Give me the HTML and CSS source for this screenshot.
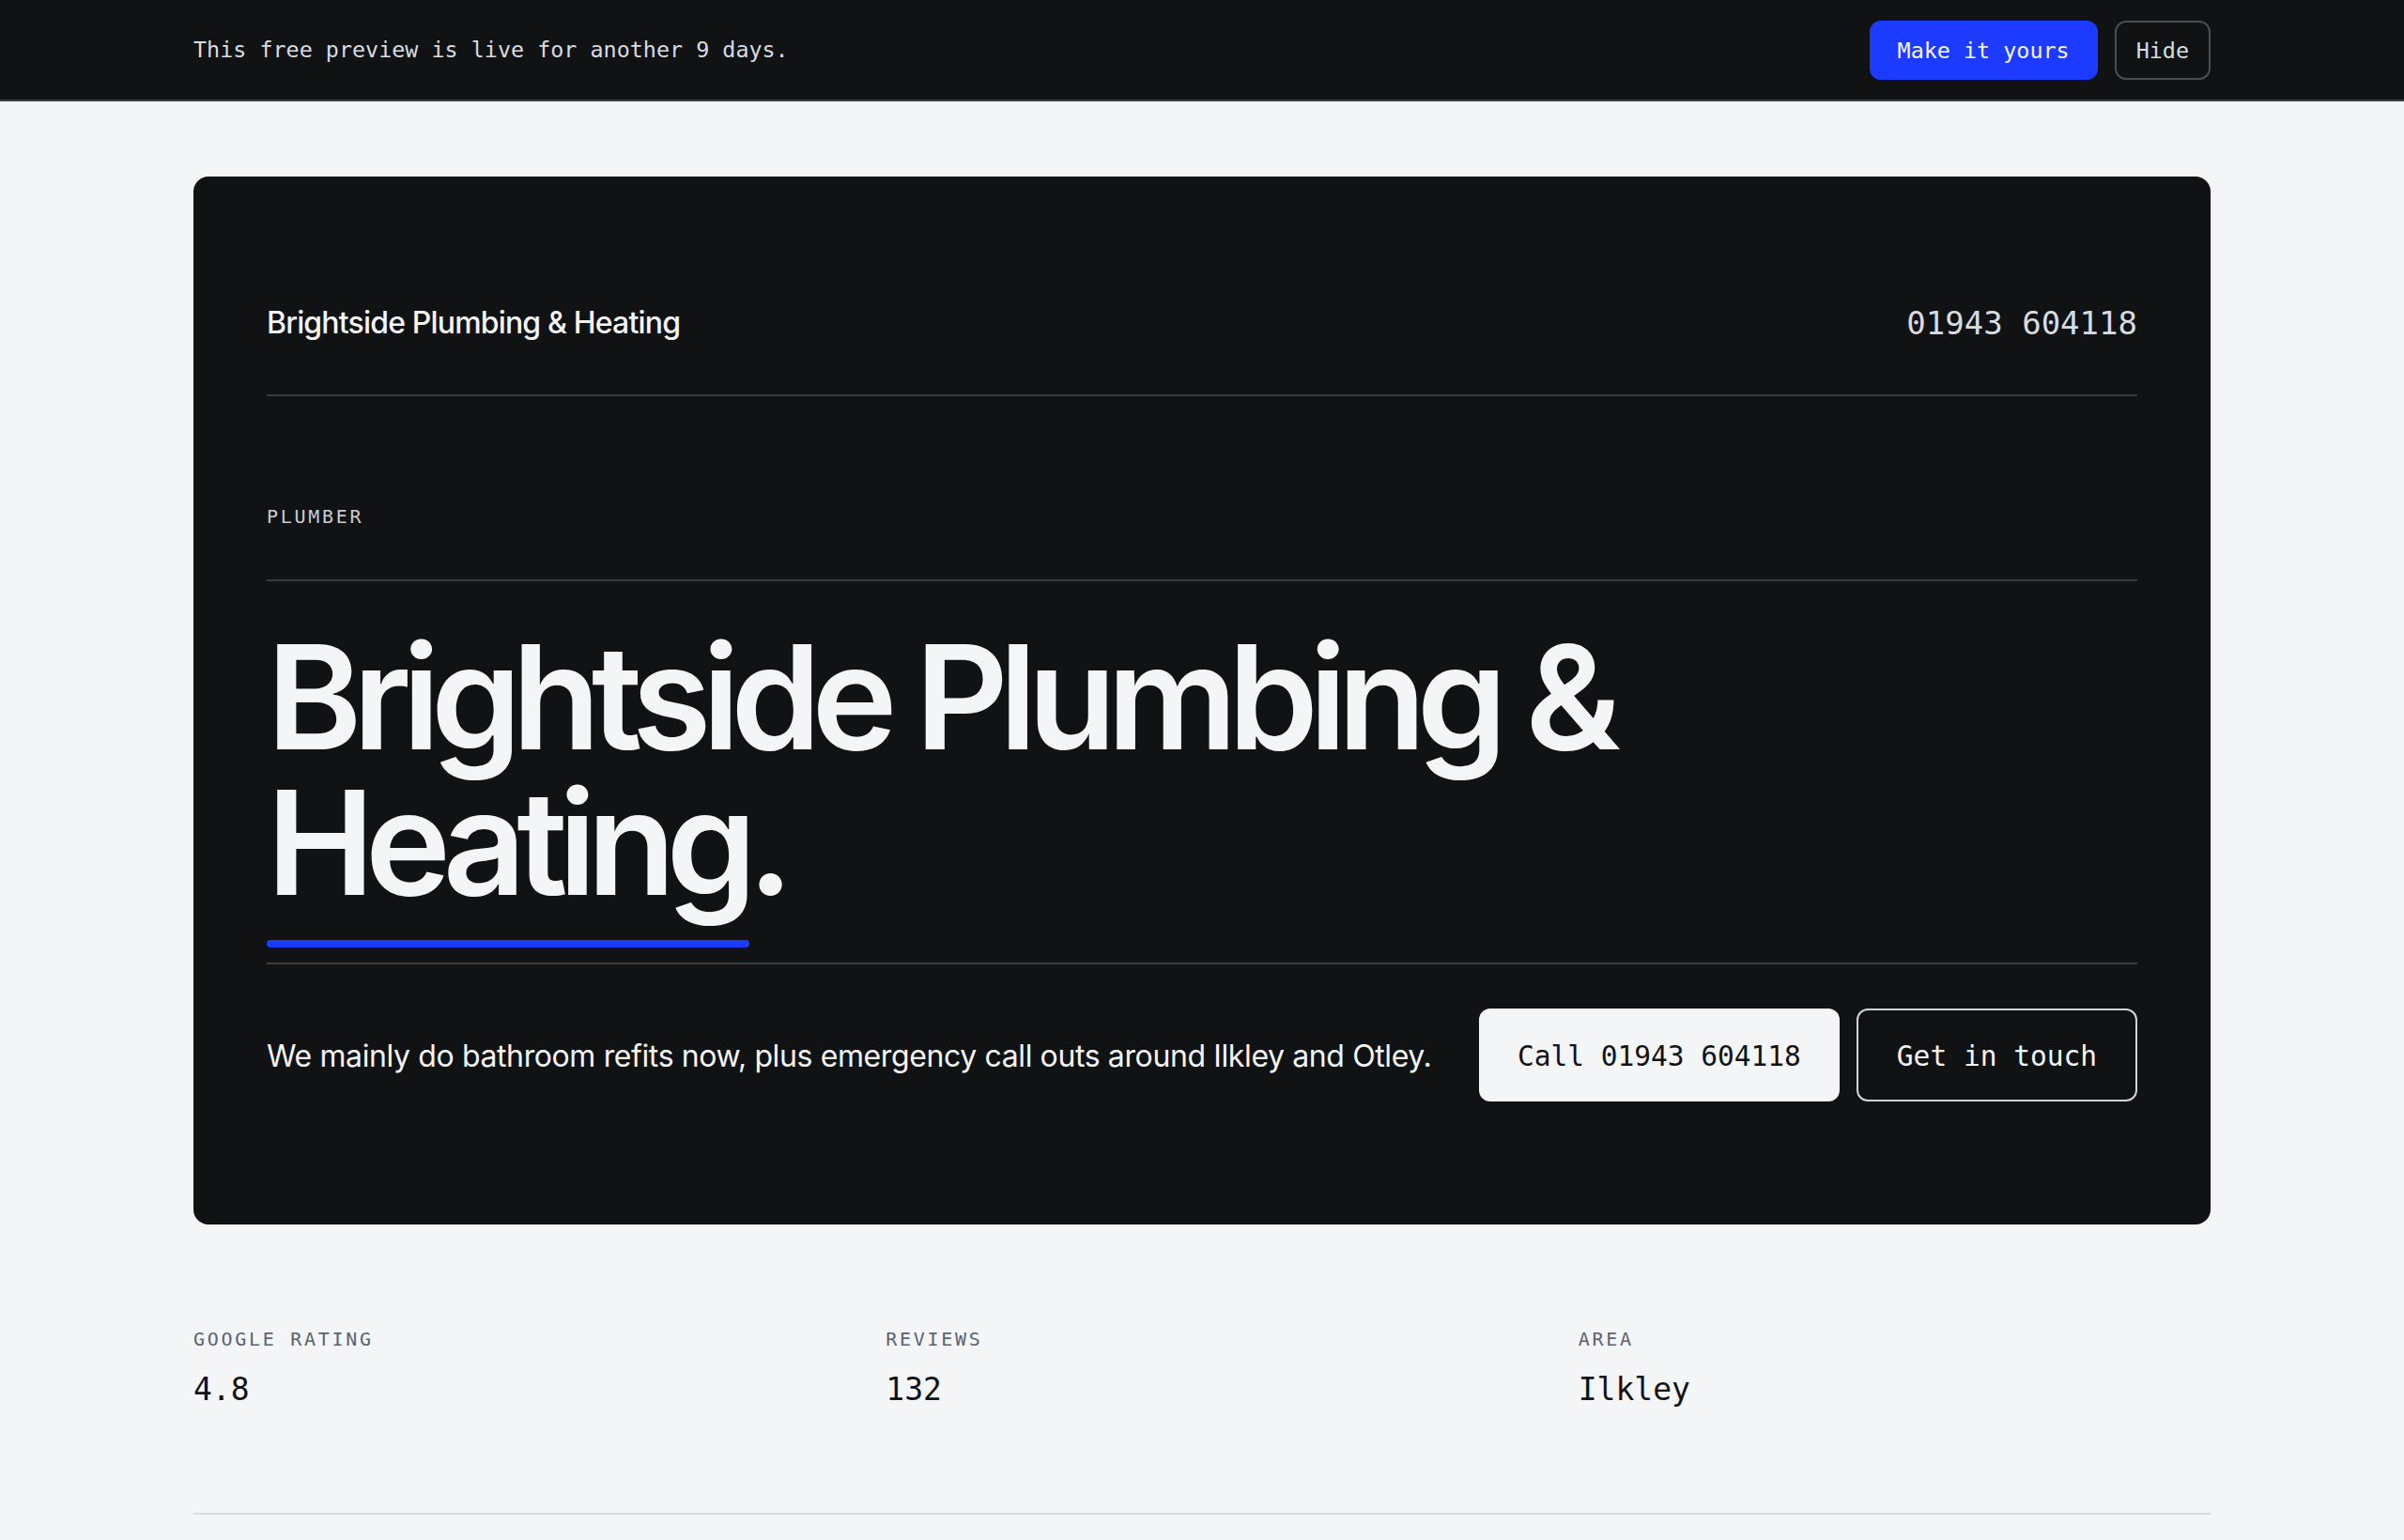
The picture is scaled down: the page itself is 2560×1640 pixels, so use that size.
FILE: index.html
```html
<!DOCTYPE html>
<html lang="en">

<head>
    <meta charset="UTF-8">
    <meta name="viewport" content="width=device-width, initial-scale=1.0">
    <title>Brightside Plumbing &amp; Heating</title>
    <link rel="stylesheet" href="styles.css">
</head>

<body>
    <div class="preview-bar">
        <div class="wrap preview-inner">
            <p class="preview-text">This free preview is live for another 9 days.</p>
            <div class="preview-actions">
                <button class="btn-claim">Make it yours</button>
                <button class="btn-hide">Hide</button>
            </div>
        </div>
    </div>

    <main class="wrap">
        <section class="hero">
            <header class="hero-head">
                <span class="brand">Brightside Plumbing &amp; Heating</span>
                <span class="head-phone">01943 604118</span>
            </header>

            <div class="eyebrow">PLUMBER</div>

            <div class="title-block">
                <h1 class="title">Brightside Plumbing &amp;<br>Heating.</h1>
                <div class="title-rule"></div>
            </div>

            <div class="hero-foot">
                <p class="tagline">We mainly do bathroom refits now, plus emergency call outs around Ilkley and Otley.</p>
                <div class="hero-actions">
                    <a class="btn-call" href="tel:01943604118">Call 01943 604118</a>
                    <a class="btn-touch" href="#contact">Get in touch</a>
                </div>
            </div>
        </section>

        <section class="stats">
            <div class="stat">
                <div class="stat-label">GOOGLE RATING</div>
                <div class="stat-value">4.8</div>
            </div>
            <div class="stat">
                <div class="stat-label">REVIEWS</div>
                <div class="stat-value">132</div>
            </div>
            <div class="stat">
                <div class="stat-label">AREA</div>
                <div class="stat-value">Ilkley</div>
            </div>
        </section>
    </main>
</body>

</html>
```

FILE: styles.css
```css
body {
    margin: 0;
    background-color: #f4f5f7;
    color: #111214;
    font-family: "Inter", "Liberation Sans", sans-serif;
}

.wrap {
    max-width: 2148px;
    margin: 0 auto;
}

/* Preview banner */
.preview-bar {
    background-color: #111214;
    border-bottom: 2px solid #3a3b3f;
}

.preview-inner {
    height: 106px;
    display: flex;
    align-items: center;
    justify-content: space-between;
}

.preview-text {
    margin: 0;
    font-family: "DejaVu Sans Mono", monospace;
    font-size: 23.4px;
    color: #d9dbe0;
}

.preview-actions {
    display: flex;
    gap: 18px;
}

.preview-actions button {
    height: 63px;
    padding-top: 1px;
    font-family: "DejaVu Sans Mono", monospace;
    font-size: 23.4px;
    border-radius: 12px;
    cursor: pointer;
}

.btn-claim {
    padding: 0 30px;
    background-color: #1d3bff;
    border: 0;
    color: #f4f5f7;
}

.btn-hide {
    padding: 0 21px;
    background-color: #111214;
    border: 2px solid #4b4c50;
    color: #d9dbe0;
}

/* Hero card */
.hero {
    margin-top: 80px;
    padding: 78px 78px 131px;
    background-color: #111214;
    border-radius: 16px;
    color: #f4f5f7;
}

.hero-head {
    display: flex;
    justify-content: space-between;
    align-items: center;
    padding: 57px 0 55px;
    line-height: 42px;
    border-bottom: 2px solid #3a3b3f;
}

.brand {
    font-size: 32px;
    font-weight: 500;
    letter-spacing: -0.026em;
}

.head-phone {
    font-family: "DejaVu Sans Mono", monospace;
    font-size: 34px;
    color: #d9dbe0;
}

.eyebrow {
    padding: 114px 0 53px;
    font-family: "DejaVu Sans Mono", monospace;
    font-size: 20px;
    line-height: 28px;
    letter-spacing: 0.135em;
    color: #c9ccd2;
    border-bottom: 2px solid #3a3b3f;
}

.title-block {
    padding: 46px 0 16px;
    border-bottom: 2px solid #3a3b3f;
}

.title {
    margin: 0;
    font-size: 154px;
    line-height: 155px;
    font-weight: 600;
    letter-spacing: -0.064em;
}

.title-rule {
    width: 514px;
    height: 8px;
    margin-top: 26px;
    background-color: #1d3bff;
    border-radius: 4px;
}

.hero-foot {
    display: flex;
    justify-content: space-between;
    align-items: center;
    padding-top: 47px;
}

.tagline {
    margin: 0;
    padding-top: 2px;
    font-size: 32px;
    letter-spacing: -0.012em;
}

.hero-actions {
    display: flex;
    gap: 18px;
}

.hero-actions a {
    display: flex;
    align-items: center;
    height: 99px;
    padding-top: 3px;
    box-sizing: border-box;
    font-family: "DejaVu Sans Mono", monospace;
    font-size: 29.5px;
    text-decoration: none;
    border-radius: 12px;
}

.btn-call {
    padding: 0 41px;
    background-color: #f4f5f7;
    color: #111214;
}

.btn-touch {
    padding: 0 41px;
    border: 2px solid #d0d3d9;
    color: #f4f5f7;
}

/* Stats */
.stats {
    display: grid;
    grid-template-columns: repeat(3, 1fr);
    gap: 64px;
    padding: 108px 0 111px;
    border-bottom: 2px solid #d8dce2;
}

.stat-label {
    font-family: "DejaVu Sans Mono", monospace;
    font-size: 20px;
    line-height: 28px;
    letter-spacing: 0.135em;
    color: #5b6370;
}

.stat-value {
    margin-top: 20px;
    font-family: "DejaVu Sans Mono", monospace;
    font-size: 33px;
    line-height: 40px;
    color: #111214;
}
```
